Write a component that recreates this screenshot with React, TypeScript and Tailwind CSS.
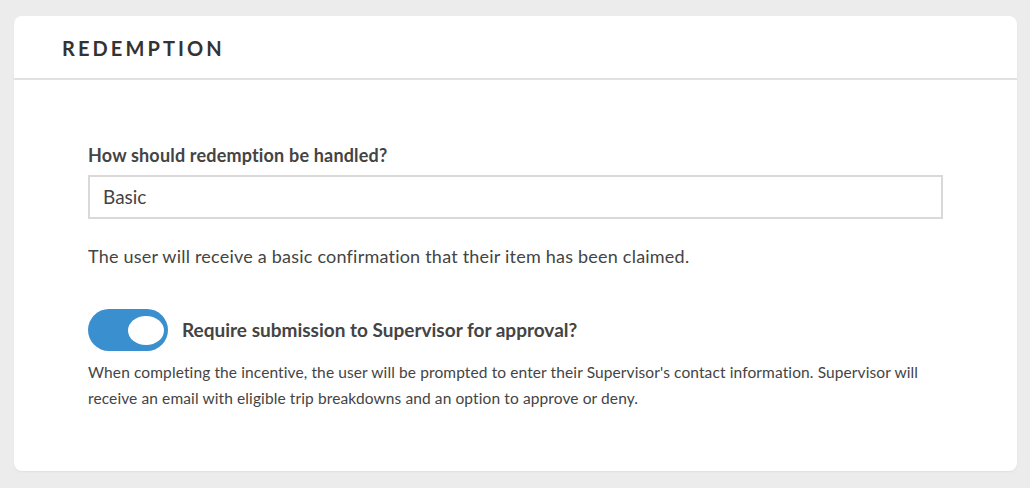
import React from "react";

export default function App() {
  return (
    <div className="w-[1030px] h-[488px] bg-[#ececec] pt-[16px] pl-[14px] pr-[13px]" style={{ fontFamily: "Lato, 'Open Sans', sans-serif" }}>
      <div className="h-[455px] bg-white rounded-[8px] shadow-[0_1px_2px_rgba(0,0,0,0.06)]">
        <div className="h-[64px] flex items-center pl-[48px] border-b-2 border-[#e1e1e1]">
          <h1 className="text-[20px] font-bold tracking-[0.155em] text-[#333] leading-none mt-[2px]">REDEMPTION</h1>
        </div>
        <div className="pl-[74px] pr-[74px] pt-[63px]">
          <div className="text-[18px] font-bold text-[#444] leading-[24px] tracking-[0.01em]">How should redemption be handled?</div>
          <div className="mt-[8px] h-[44px] border-2 border-[#d9d9d9] flex items-center pl-[13px] text-[19px] text-[#444]">Basic</div>
          <p className="mt-[24px] text-[18px] text-[#444] leading-[26px] tracking-[0.012em]">The user will receive a basic confirmation that their item has been claimed.</p>
          <div className="mt-[40px] flex items-center gap-[14px]">
            <div className="w-[80px] h-[42px] rounded-full bg-[#3a8fce] flex items-center justify-end pr-[4px]">
              <div className="w-[36px] h-[29px] rounded-[50%] bg-white" />
            </div>
            <div className="text-[19px] font-bold text-[#444]">Require submission to Supervisor for approval?</div>
          </div>
          <p className="mt-[8px] text-[15.5px] text-[#444] leading-[26px] tracking-[0.007em]">
            When completing the incentive, the user will be prompted to enter their Supervisor's contact information. Supervisor will receive an email with eligible trip breakdowns and an option to approve or deny.
          </p>
        </div>
      </div>
    </div>
  );
}
